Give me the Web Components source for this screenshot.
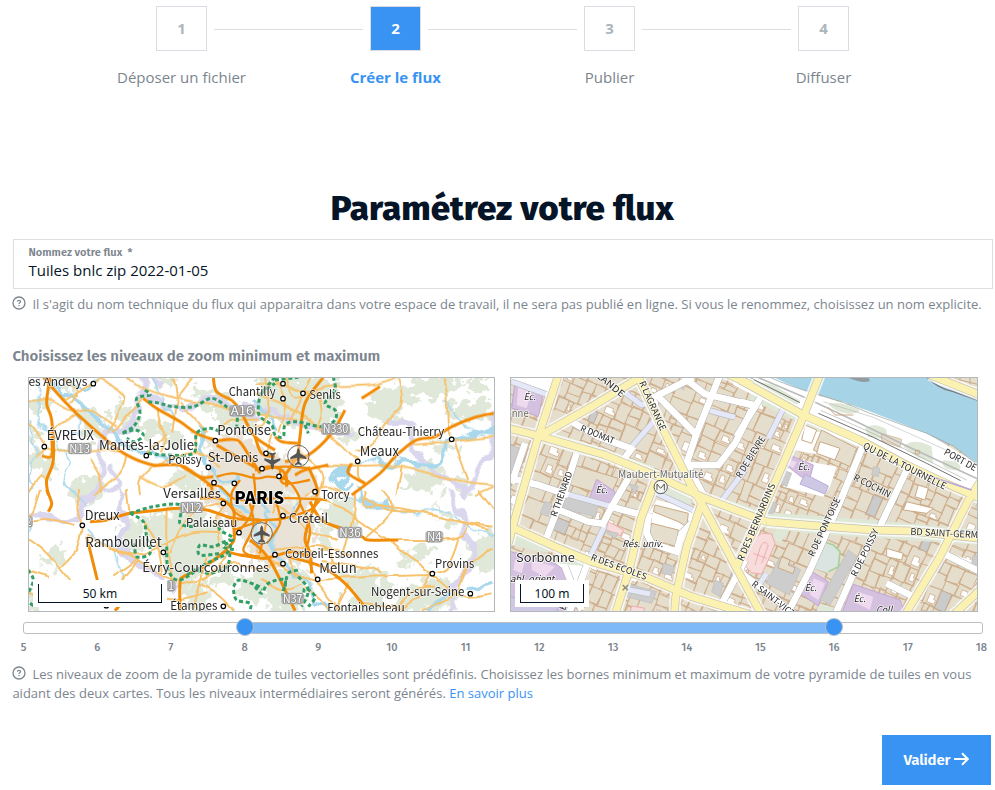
<!DOCTYPE html>
<html lang="fr">
<head>
<meta charset="utf-8">
<title>Paramétrez votre flux</title>
<style>
html,body{margin:0;background:#fff}
body{width:995px;height:790px;overflow:hidden;font-family:"Open Sans","Noto Sans",sans-serif;color:#7c858e;
--head:"Fira Sans","Noto Sans",sans-serif;--blue:#3993f3;--ink:#051426;--line:#dcdee2}
</style>
</head>
<body>
<flux-page></flux-page>
<script>
const define=(name,html,setup)=>customElements.define(name,class extends HTMLElement{
  connectedCallback(){
    if(this.shadowRoot)return;
    this.attachShadow({mode:'open'}).innerHTML=typeof html==='function'?html(this):html;
    if(setup)setup(this);
  }
});

define('step-item',el=>`<style>
:host{display:block;flex:0 0 214px;text-align:center}
.row{display:flex;align-items:center;height:45px}
.line{flex:1;height:1px;background:var(--line);position:relative;top:.5px}
.line.l{margin-right:7px}.line.r{margin-left:7px}
:host([first]) .l,:host([last]) .r{background:none}
.box{box-sizing:border-box;width:51px;height:45px;border:1px solid #dadce3;font-weight:700;font-size:15px;line-height:43px;color:#adb5bd}
.label{font-size:15px;line-height:22px;margin-top:15px}
:host([active]) .box{background:var(--blue);color:#fff}
:host([active]) .label{color:var(--blue);font-weight:700}
</style><div class="row"><span class="line l"></span><span class="box">${el.getAttribute('n')}</span><span class="line r"></span></div><div class="label"><slot></slot></div>`);

define('help-text',`<style>
:host{display:block;font-size:13px;line-height:19px;color:#7c858e;letter-spacing:.007px}
svg{width:14px;height:14px;vertical-align:-.5px;margin-right:6px;margin-top:-2px}
</style><svg viewBox="0 0 14 14"><circle cx="7" cy="7" r="6" fill="none" stroke="#7c858e" stroke-width="1.3"/><path d="M5.4 5.6Q5.5 4.3 7 4.3T8.6 5.6Q8.6 6.3 7.8 6.8T7 7.9M7 9v1.2" fill="none" stroke="#7c858e" stroke-width="1.2"/></svg><slot></slot>`);

define('text-field',el=>`<style>
:host{display:block;box-sizing:border-box;height:50px;border:1px solid var(--line);padding:6px 15px 6px 14.5px}
.l{font:600 11px/13px var(--head);color:#7c858e;white-space:pre}
.v{font-size:15px;line-height:23px;color:var(--ink)}
</style><div class="l">${el.getAttribute('label')}  *</div><div class="v"><slot></slot></div>`);

define('zoom-slider',el=>{
  const n=[];for(let i=5;i<=18;i++)n.push(`<span>${i}</span>`);
  return `<style>
:host{display:block;width:960px}
.track{position:relative;box-sizing:border-box;height:12px;border:1px solid #bcbec0;border-radius:3px;background:#fff}
.range{position:absolute;top:0;bottom:0;left:221px;width:589px;background:#7db8f8}
i{position:absolute;box-sizing:border-box;width:18px;height:18px;border-radius:50%;top:-5px;background:var(--blue);border:1px solid #b9c0c8}
.nums{display:flex;justify-content:space-between;margin:7px -9px 0 -10px;font:500 11px/13px var(--head);color:#7c858e}
.nums span{width:21px;text-align:center}
</style><div class="track"><div class="range"></div><i style="left:212px"></i><i style="left:801px"></i></div><div class="nums">${n.join('')}</div>`});

define('primary-button',`<style>
:host{display:flex;align-items:center;justify-content:center;box-sizing:border-box;width:109px;height:50px;background:var(--blue);color:#fff;font:600 15px/20px var(--head)}
span{letter-spacing:-.15px}
svg{width:15px;height:14px;margin:-2px 0 0 4px}
</style><span><slot></slot></span><svg viewBox="0 0 15 14"><path d="M0 7H13.5M8 1.2 13.8 7 8 12.8" fill="none" stroke="#fff" stroke-width="2"/></svg>`);

/* ---------- map drawing helpers ---------- */
const pts=s=>s.trim().split(/\s+/).map(p=>p.split(',').map(Number));
// Catmull-Rom spline through the points
const curve=s=>{
  const p=pts(s);let d=`M${p[0]}`;
  for(let i=0;i<p.length-1;i++){
    const a=p[i-1]||p[i],b=p[i],c=p[i+1],e=p[i+2]||c;
    d+=`C${b[0]+(c[0]-a[0])/6},${b[1]+(c[1]-a[1])/6} ${c[0]-(e[0]-b[0])/6},${c[1]-(e[1]-b[1])/6} ${c}`;
  }
  return d;
};
const poly=s=>'M'+pts(s).map(p=>p.join()).join('L')+'Z';
const line=s=>'M'+pts(s).map(p=>p.join()).join('L');
// data: {tile: 'path | path'}, tiles being offsets on the drawing grid
const layer=(data,off,fn,attrs)=>`<g ${attrs}>`+Object.entries(data).map(([k,v])=>`<path transform="translate(${off[k]})" d="${v.split('|').map(fn).join('')}"/>`).join('')+'</g>';
const FONT='Noto Sans CJK SC,Noto Sans,sans-serif';
const label=(x,y,t,w,size,o={})=>`<text x="${x}" y="${y}" font-size="${size}" textLength="${w}" lengthAdjust="spacingAndGlyphs" ${o.rot?`transform="rotate(${o.rot} ${x} ${y})"`:''} fill="${o.fill||'#262626'}" ${o.b?'font-weight="900"':''} ${o.i?'font-style="italic"':''} ${o.halo?`stroke="${o.halo}" stroke-width="${o.hw||5}" paint-order="stroke" stroke-linejoin="round"`:''}>${t}</text>`;

const mapStyle=`<style>
:host{display:block;box-sizing:border-box;height:235px;border:1px solid #b3b8bb;position:relative;overflow:hidden;background:#fff}
svg{display:block}
.scale{position:absolute;left:4px;bottom:4px;background:#fff;padding:4px 5px;}
.scale div{box-sizing:border-box;height:19px;border:1px solid var(--ink);border-top:0;font:12px/19px "Noto Sans",sans-serif;color:var(--ink);text-align:center}
</style>`;

define('region-map',()=>{
  const off={A:'0 0',B:'705 0',C:'0 360',D:'705 360'};
  const forest={
  A:'24,95 60,85 88,100 70,125 30,120|165,135 225,118 250,150 232,205 190,190|24,180 60,195 24,215|24,240 70,255 112,300 80,310 24,270|345,160 400,155 440,175 430,205 380,195|520,70 600,75 640,110 610,140 540,110|150,355 200,320 245,350 210,380 140,375|470,300 540,320 530,365 450,340|110,22 170,22 150,60 110,50|400,22 470,22 440,55|280,120 310,100 330,150 300,180|580,130 680,130 700,180 600,165|440,180 490,200 470,230 430,215',
  B:'60,25 200,22 240,60 235,160 160,165 60,150 10,120 20,60|330,95 440,50 520,25 620,25 590,60 470,90 430,140 360,160|560,110 690,95 705,130 650,160 600,150|460,330 500,280 560,310 540,362 450,345|520,200 600,220 560,245|0,20 60,22 30,70|640,30 700,30 705,70 650,60|600,320 640,340 620,370|250,180 310,190 280,215',
  C:'370,80 480,65 560,80 615,120 610,180 560,230 490,290 445,250 440,200 380,140|290,130 350,90 370,170 340,200|105,172 130,190 110,235 60,215|480,290 550,290 560,350 500,362|650,270 720,275 720,330 660,320|24,290 60,300 50,362 24,362|140,0 200,5 190,40 150,30|560,290 600,240 650,250 620,290',
  D:'200,50 290,30 310,70 280,110 200,105|435,200 520,170 520,195 440,225|240,250 340,235 395,290 360,362 280,362 290,300|640,170 720,130 720,230 650,230|430,300 560,270 600,330 500,362 400,350|60,250 130,240 160,300 120,362 30,350|550,60 600,80 590,120|0,250 60,240 50,300 0,300|180,110 220,130 200,180'};
  const purple={
  A:'372,22 375,60 350,90 345,140 320,185 265,180 240,230 245,290 240,350 190,400|375,50 420,105 520,110 570,85 640,115 720,150|265,290 300,350 240,360|400,22 425,50',
  B:'-40,105 60,125 130,160 200,180 300,190|400,160 470,165 470,230 520,290 560,320 620,350 640,375|716,120 716,240 680,280 640,370',
  C:'30,80 70,75 130,90 180,80 190,40 230,0|310,0 300,60 325,100 290,160 330,210 390,240 440,280 470,300|300,160 350,210',
  D:'590,0 600,60 640,80 620,130 660,180 640,230 600,290 590,362|640,20 620,0'};
  const thinWater={
  A:'60,22 60,110 45,150 90,180 120,230 150,280 130,330 170,370|160,120 180,170 150,200|24,150 45,230 35,300 24,370|400,22 420,90 480,160',
  B:'560,90 600,130 640,180 690,200|200,280 300,290 370,260',
  C:'200,120 230,150 270,170 300,230 310,290|24,130 40,90|150,0 200,50',
  D:'250,0 320,30 400,45 480,70 560,65 620,90 660,120 716,130|140,20 100,90'};
  const water={
  A:'90,30 120,80 160,70 190,110 240,150 290,200 330,240 380,250 430,260 480,260|150,30 190,60 230,35|540,170 545,250 580,300 610,340 660,325',
  B:'280,290 230,320 255,350 290,345|0,90 30,125 60,180|260,340 280,290 240,330|370,260 400,290 440,270 510,290 560,270 580,220 650,200 716,180',
  C:'605,0 625,40 690,70 705,130 720,170',
  D:'30,70 60,110 50,160 70,200 110,240 160,280 190,340 250,362|310,0 340,45 400,40|640,300 716,285|600,310 560,330 520,362|0,30 40,60'};
  const minor={
  A:'24,100 80,85 150,120 210,120 290,170|240,22 310,80 290,140 265,190|130,90 210,45 240,22|170,130 90,190|75,230 130,245 240,240 300,245|210,265 240,320 240,370|24,160 60,200 75,230 50,260|320,22 350,45 470,85 590,105 660,130|460,22 470,80 460,190|520,22 470,85|410,110 415,150 435,200 420,250|380,250 440,190|320,255 300,310 220,375|400,285 360,330 360,375|360,320 430,350 500,320|480,100 530,150 560,190|530,190 530,250 600,260|400,290 460,260 540,250 600,290|24,370 60,320 80,330|600,180 640,150 720,150|150,100 170,60 130,22|375,80 330,130 280,190',
  B:'0,40 60,40 160,65 220,50 350,45 420,22|60,22 90,100 70,190|90,22 120,80 180,65 200,130 180,180|430,22 440,100 400,150 350,225 300,240|565,22 575,90 580,180 590,210|180,170 250,215 290,255 310,270|210,285 330,290 440,290 600,330 716,345|440,290 425,375|600,220 640,330|470,220 580,215 716,200|30,20 40,90 30,160 0,170|0,130 130,150|170,22 100,170|310,275 310,320 330,340|0,70 100,110 200,180 220,200|50,190 30,260|130,240 200,310 190,375|150,375 210,350 280,370|660,375 716,350',
  C:'24,145 70,180 120,235 170,300|120,235 170,180 185,110|24,95 100,90 160,105|220,150 280,180 360,190 420,170 520,130 600,130|370,95 410,160 430,260|280,260 350,210|200,130 270,180 340,200 430,260 470,270|290,362 310,270 360,210|330,75 320,0|440,60 440,160 460,280|540,60 500,90 450,190|480,280 560,260 620,200|560,200 540,280 520,362|540,280 600,320 640,362|550,270 640,220 720,240|620,40 590,90 600,170|24,310 100,320|24,240 90,260|180,100 170,0|500,70 610,40 680,80|60,0 40,60 24,80|400,320 480,330 560,310',
  D:'170,20 250,50 320,100 400,150 460,200 530,250|300,0 295,90 260,200|330,0 330,50 410,50 640,100 716,110|320,20 400,60 510,70 700,120|430,150 600,145 640,100|330,145 390,90 420,50|610,145 580,230 540,250|190,270 350,260 530,255|380,250 350,235 200,210|530,255 580,300 640,320 716,310|530,255 490,320 430,362|500,362 600,310 640,230 716,170|190,280 160,200 150,130|60,180 200,170 240,230|280,280 240,362|20,20 90,60 160,120 250,150|100,200 120,250 190,270|190,280 230,330 260,362|330,340 420,350|670,0 716,60|50,70 80,0|0,180 60,220 130,260|0,240 80,220|420,362 480,300 540,290|190,180 250,180 300,200|380,0 420,50|20,270 80,300 140,280|150,290 210,340 220,362'};
  const major={
  A:'90,22 80,100 95,150 100,270 80,330 85,375|70,22 130,90 180,140 260,210 320,255 400,285 480,285 540,320 580,320|580,22 590,65 640,95 665,130 705,200 765,240|370,85 410,115 480,155 530,190 590,212|66,258 95,258 95,200|590,212 650,210 680,245 720,310|480,285 570,345 570,375|590,225 650,260 720,300',
  B:'205,22 150,100 135,200 125,260 80,330|270,120 230,190 160,255 90,275|320,85 375,50|716,130 660,142 590,170 540,200 480,212 420,260 375,310 290,375|60,200 80,215 130,220|120,315 150,300 220,285|160,290 185,350 185,380|290,280 280,310 330,340|0,200 20,250 60,260|0,300 50,290 90,310 95,350',
  C:'80,0 95,40 85,65|210,95 260,90 330,70 420,60 480,55 560,60 640,85 720,90|200,140 232,270|620,180 560,225 490,260 480,280 480,362|640,100 642,150 620,180 660,195 720,200|300,345 285,362|540,25 600,25 640,60 640,100',
  D:'-15,150 20,180 50,220 100,320 120,362|185,30 160,100 150,150 165,190 170,250|240,110 320,140 340,150 430,150|100,200 200,230 270,280 325,345|-40,195 30,205 110,185 170,200|165,35 200,90 260,115'};
  // dense network around the capital
  const city='590,320 640,310 710,325 745,320 800,330 830,365 840,400 810,440 740,450 680,445 640,420 635,370 660,330|560,345 600,350 640,385 690,390 760,385 840,385 920,390|700,310 705,370 690,440 640,500|720,300 790,290 870,295|780,300 790,340 870,330|740,450 720,550|690,400 700,470 670,540 705,560|810,440 870,420 900,390|770,400 780,460 740,520|640,480 730,450|840,400 870,480 850,560';
  const green={
  A:'375,60 390,75 350,85 360,130 340,170 305,190 345,180 370,195 345,215 320,205|385,95 420,100 460,110 520,110 575,85 620,110 650,130 650,170|385,250 440,255 520,250 530,190 570,175 600,185|330,225 350,240',
  B:'60,22 20,70 10,110 15,140 50,165 60,195 85,200 90,165 125,155 200,170 240,150 240,120 210,100 240,60 235,22|20,70 60,40|150,165 160,190|60,30 130,22',
  C:'330,70 370,95 380,140 390,190 350,200 345,160|330,70 400,50 480,45 480,100 520,110|440,170 445,240 480,270 560,220 620,190 630,150 580,170 540,165 540,195 600,190|600,90 600,120 640,145 610,170 650,180|630,190 620,230 570,250 520,240 500,260|24,240 40,270 24,310|640,290 660,270 720,290|640,300 650,330 690,340 690,362|30,340 45,350',
  D:'0,290 20,310 40,280 90,270 85,320 140,320 150,295 180,320 160,350|90,290 100,250 130,240|130,260 160,300 140,350|0,290 20,300'};
  const towns={A:'220,41 73,230 379,257 586,212 565,292 582,338 643,340',B:'84,41 84,86 144,70 590,208 308,274 33,250 21,296 72,319 180,365',C:'187,106 430,187 657,128 610,40 610,349 259,347',D:'84,77 60,194 84,221 188,268 532,251 646,311'};
  const plane='M0-24q5 4 5 16L24 4v6L4 5 3 18l7 6v4L0 25l-10 3v-4l7-6L-4 5-24 10V4L-5-8q0-12 5-16z';
  let s='';
  s+=layer(forest,off,curve,'fill="#e0e8d9" stroke="#e0e8d9" stroke-width="10" filter="url(#rough)"');
  s+='<path filter="url(#rough)" fill="#e9e2d6" d="M560,215L640,190 700,215 760,250 850,275 890,330 875,430 890,520 860,600 800,560 760,600 700,560 650,480 600,440 560,380Z"/>';
  s+='<path filter="url(#rough)" fill="#eef4e7" d="M600,345h40v50h-35zM790,365h40v40h-30z"/>';
  s+=layer(purple,off,curve,'fill="none" stroke="#d9d6ed" stroke-width="18" stroke-linejoin="round" filter="url(#wave)"');
  s+=layer(thinWater,off,curve,'fill="none" stroke="#a9d8ec" stroke-width="5" filter="url(#wave)"');
  s+=layer(water,off,curve,'fill="none" stroke="#a9d8ec" stroke-width="12" stroke-linecap="round" filter="url(#wave)"');
  s+=layer(minor,off,curve,'fill="none" stroke="#f7c36e" stroke-width="6" filter="url(#small)"');
  s+=layer(major,off,curve,'fill="none" stroke="#f28b05" stroke-width="9"');
  s+=`<path fill="none" stroke="#f28b05" stroke-width="7" d="${city.split('|').map(curve).join('')}"/>`;
  s+=layer(green,off,curve,'fill="none" stroke="#339f66" stroke-width="9" stroke-dasharray="12 8"');
  for(const k in towns)s+=`<g transform="translate(${off[k]})" fill="#fff" stroke="#000" stroke-width="3.5">`+pts(towns[k]).map(p=>`<circle cx="${p[0]}" cy="${p[1]}" r="6.8"/>`).join('')+'</g>';
  s+=`<g fill="#555"><path transform="translate(757 275) rotate(180)" d="${plane}"/><g stroke="#666" stroke-width="3" fill="#ffffff55"><circle cx="835" cy="258" r="32"/><circle cx="725" cy="490" r="32"/></g><path transform="translate(835 258)" d="${plane}"/><path transform="translate(725 490)" d="${plane}"/></g>`;
  const sh=(x,y,t,w)=>`<rect x="${x-5}" y="${y-30}" width="${w+10}" height="35" rx="10" fill="#aaa" fill-opacity=".85"/>`+label(x,y,t,w,34,{fill:'#fff',halo:'#8c8c8c',hw:5});
  s+=sh(632,135,'A16',68)+sh(148,248,'N13',62)+sh(908,190,'N330',77)+sh(484,425,'N12',61)+sh(958,500,'N36',64)+sh(1221,513,'N4',44)+sh(789,698,'N37',58)+sh(444,660,'1',18)+sh(6,468,'12',28);
  const L=[[15,47,'les Andelys',187,36],[80,211,'ÉVREUX',142,41],[237,241,'Mantes-la-Jolie',285,41],[445,281,'Poissy',100,36],[563,275,'St-Denis',152,39],[592,195,'Pontoise',161,40],[626,77,'Chantilly',141,36],[430,384,'Versailles',173,38],[868,88,'Senlis',94,36],[1013,197,'Château-Thierry',260,36],[1019,258,'Meaux',118,40],[903,388,'Torcy',86,36],[194,451,'Dreux',105,40],[498,471,'Palaiseau',154,36],[196,531,'Rambouillet',229,41],[367,605,'Évry-Courcouronnes',381,39],[451,719,'Étampes',141,36],[806,459,'Créteil',119,39],[795,565,'Corbeil-Essonnes',280,36],[898,610,'Melun',112,40],[1245,594,'Provins',118,36],[1053,677,'Nogent-sur-Seine',280,36],[922,726,'Fontainebleau',232,36]];
  L.forEach(l=>s+=label(...l,{halo:'#ffffffb0'}));
  s+=label(643,402,'PARIS',150,53,{b:1,fill:'#000',halo:'#fff'});
  const noise='x="-5%" y="-5%" width="110%" height="110%" color-interpolation-filters="sRGB"';
  return mapStyle+`<svg width="465" height="233" viewBox="27 24 1395 699" font-family="${FONT}"><defs>
<filter id="rough" ${noise}><feTurbulence type="fractalNoise" baseFrequency=".035" numOctaves="3" seed="4"/><feDisplacementMap in="SourceGraphic" scale="90" xChannelSelector="R" yChannelSelector="G"/></filter>
<filter id="wave" ${noise}><feTurbulence type="fractalNoise" baseFrequency=".03" numOctaves="1" seed="9"/><feDisplacementMap in="SourceGraphic" scale="42" xChannelSelector="R" yChannelSelector="G"/></filter>
<filter id="small" ${noise}><feTurbulence type="fractalNoise" baseFrequency=".02" numOctaves="1" seed="2"/><feDisplacementMap in="SourceGraphic" scale="20" xChannelSelector="R" yChannelSelector="G"/></filter>
</defs>${s}</svg><div class="scale" style="width:124px;padding-left:5px"><div>50 km</div></div>`;
});

define('street-map',()=>{
  const off={E:'0 0',F:'705 0'};
  let seed=11;const rnd=()=>(seed=(seed*16807)%2147483647)/2147483647;
  let lots='',court='',grey='';
  // building plots: recursive random subdivision of the rotated ground
  const split=(x,y,w,h)=>{
    if((w<62&&h<62&&rnd()<.82)||(w<34&&h<34)){
      const j=()=>(rnd()-.5)*6;
      lots+=`M${x+j()},${y+j()}L${x+w+j()},${y+j()} ${x+w+j()},${y+h+j()} ${x+j()},${y+h+j()}Z`;
      const r=rnd();
      if(r<.17){const a=w*(.25+rnd()*.15),b=h*(.25+rnd()*.2);court+=`M${x+a},${y+b}h${w*.4}v${h*.22}h${w*.14}v${h*.24}h${-w*.54}z`}
      else if(r<.185)grey+=`M${x},${y}h${w}v${h}h${-w}z`;
      return;
    }
    const t=.36+rnd()*.28;
    if(w>h){split(x,y,w*t,h);split(x+w*t,y,w*(1-t),h)}else{split(x,y,w,h*t);split(x,y+h*t,w,h*(1-t))}
  };
  split(-300,-700,1900,1800);
  const yellow={
  E:'0,172 110,200 300,255 460,320 600,385 785,455|165,0 100,200 45,390 10,520|100,200 260,110 400,25|395,10 470,170 560,350 590,400 660,530 770,735|590,400 545,530 512,680 508,735|450,335 410,440 375,590 330,735|0,462 150,530 260,575 430,625 560,680 740,735|640,0 740,45',
  F:'0,30 190,135 360,210 500,285 640,350 720,385|245,0 190,140 130,280 60,440 -10,590|80,455 200,465 400,480 510,483 720,505|720,335 680,400 600,560 540,660 495,735|570,15 720,75|640,735 720,660'};
  const white={
  E:'190,150 280,200 385,238|385,230 340,290|215,250 180,360 118,520|0,320 100,345 190,375|310,408 440,442|370,325 320,410 290,470|255,560 190,735|150,415 250,455 300,462|420,60 450,100 450,150|440,85 565,22|460,80 575,195|645,15 575,190 545,280 600,385|550,285 640,285 690,220 740,120|535,22 600,72 740,105|430,430 425,490 440,520 515,545 530,490 560,460|640,720 720,570|60,220 20,340|180,590 230,720',
  F:'370,225 290,420 210,600 140,735|505,290 415,480|410,480 345,600 285,735|-10,600 100,680 160,735|600,545 720,605|440,640 520,680|60,85 -10,200|0,95 40,105'};
  const lav={E:'20,35 130,75|350,60 410,105 450,92|450,150 375,235|185,372 320,410|300,465 255,560|615,122 690,142|365,658 435,672|650,392 720,300|455,370 575,425',F:'130,115 85,205|0,310 30,260|80,610 60,640'};
  let s='<g transform="rotate(23 350 350)">'+`<path d="${lots}" fill="#e6decd" stroke="#cdad8b" stroke-width="2.8"/><path d="${grey}" fill="#cbcbcb" stroke="#bba793" stroke-width="2"/><path d="${court}" fill="#fff" stroke="#cba985" stroke-width="2"/></g>`;
  // planted strips
  s+=layer({E:'100,175 260,225 450,290 440,310 250,262 100,215|455,345 560,375 560,410 450,375|590,375 720,405 720,440 600,405|16,485 120,510 130,550 16,525|150,560 240,580 210,620 150,590',F:'60,425 400,450 720,480 720,525 200,490 60,470|110,475 150,480 120,520 95,500|0,400 80,430 60,450 0,440|30,60 100,85 230,140 350,215 330,235 90,115 30,90|235,700 290,715 270,730 230,730'},off,poly,'fill="#dfe8d7"');
  s+=layer({E:'455,390 560,415 580,440 555,520 430,500 425,440|20,22 150,22 135,70 20,30|150,580 260,590 210,700 170,640',F:'170,180 280,190 340,235 330,270 160,240|140,300 180,270 290,290 270,350 250,380 130,350|600,540 720,580 720,600 600,560'},off,poly,'fill="#fff"');
  s+=layer({E:'450,405 550,430 545,470 520,455 445,425|440,460 520,480 515,530 430,505|190,280 340,325 315,380 180,340',F:'245,180 350,235 330,290 220,240'},off,poly,'fill="#e6decd" stroke="#cba985" stroke-width="3"');
  s+=layer({F:'240,215 300,235 285,270 230,250|195,165 230,180 215,220 185,210|535,345 565,355 555,390 525,380|500,395 580,415 560,430 490,420|440,535 490,550 485,570 440,560'},off,poly,'fill="#fff" stroke="#cba985" stroke-width="3"');
  // schools and public buildings
  s+=layer({E:'30,35 115,70 100,140 60,125 20,115|275,328 330,365 322,408 253,385|16,545 150,580 190,610 210,730 16,730',F:'155,258 220,285 208,332 180,318 138,285|205,598 265,635 235,708 172,665|340,643 480,690 495,730 305,730'},off,poly,'fill="#d4c0df" stroke="#c3a6d3" stroke-width="3"');
  s+=layer({E:'40,50 80,65 65,115 35,105|30,570 60,570 50,610 25,600|80,570 150,590 120,620 80,600|100,670 160,690 150,730 110,710',F:'150,270 170,275 160,295 145,285|220,625 255,640 235,690 210,675|350,665 400,680 390,720 350,700'},off,poly,'fill="#efd9ee"');
  s+=layer({F:'195,312 265,348 255,372 180,342',E:'16,680 160,710 150,735 16,735'},off,poly,'fill="#cfc8e4" stroke="#b9aedb" stroke-width="3"');
  s+=layer({E:'310,455 356,480 345,498 302,478|380,708 420,715 410,735 375,730',F:'50,500 65,490 95,492 105,520 85,570 65,612 35,608 12,585'},off,poly,'fill="#f8dcdb" stroke="#f0adad" stroke-width="3"');
  s+='<path d="M750,585 765,535Q775,505 790,525L770,580M745,550 785,565" fill="none" stroke="#f0adad" stroke-width="3"/>';
  s+=layer({E:'16,225 45,235 35,310 16,300|180,380 280,405 270,440 170,415|120,395 140,400 130,440 105,430|510,40 545,25 535,60|475,580 510,590 500,615 470,610|630,630 655,640 645,680 620,665|365,640 455,665 440,700 365,680|290,480 340,490 330,505|370,340 400,350 390,370',F:'120,560 182,600 148,675 78,640|325,540 352,560 270,705 240,688|130,300 155,310 140,350 120,340|90,395 110,400 100,430 85,430|400,290 420,295 415,320 395,315|700,555 720,560 720,590 695,580'},off,poly,'fill="#cdcdcd" stroke="#bdbdbd" stroke-width="2"');
  s+='<path d="M955,515L985,525 1005,545 1000,590 970,610 925,595 945,550Z" fill="#dae5e2"/><path d="M955,515L985,525 1005,545 1000,590 970,605" fill="none" stroke="#a7d19a" stroke-width="5"/><path d="M830,560l25,10-5,15 20,8-6,18-45-18z" fill="#e6decd" stroke="#cba985" stroke-width="3"/>';
  // river and quays
  s+='<g transform="translate(705 0)"><path d="M-20,10L100,10 220,72 380,120 560,190 720,285V400L500,300 190,150 -20,45Z" fill="#fff"/><path d="M90,15Q150,50 230,72T385,122L560,190 640,228 725,290V0H90Z" fill="#a7d3e7"/><path d="M90,22Q150,50 230,72T385,128L560,190 640,228 720,290" fill="none" stroke="#8f9b9f" stroke-width="2"/><path d="M565,22Q590,48 630,55L725,92V0H560Z" fill="#e9f0e4"/><path d="M555,15Q590,55 640,65L725,95" fill="none" stroke="#77797a" stroke-width="4"/><path d="M620,10L725,10V65L640,35Z" fill="#e6decd" stroke="#cba985" stroke-width="3"/><path d="M660,10V45M690,10V55M640,25L720,45" stroke="#cba985" stroke-width="3"/><path d="M320,22H385L390,33Q375,40 350,32Z" fill="#929ba0"/><path d="M0,22L100,45 180,92 170,105 80,80 0,30ZM265,102q30-10 75,10 40,15-10,20-45-5-65-30zM375,175q30-20 65,5v30l-55-10zM490,230q30-30 85,0l5,50-50-20zM610,270l40,5q30 30-15,25-35,-5-25-30z" fill="#dfe8d7"/><path d="M425,190L485,208 480,232 425,212Z" fill="#e6decd" stroke="#cba985" stroke-width="2"/><path d="M30,12L200,85 350,155 500,228 720,330" fill="none" stroke="#bbb" stroke-width="5"/><path d="M250,95L400,142 640,250" fill="none" stroke="#aaa" stroke-width="1.5"/><path d="M20,18L180,98M235,130L400,202 560,280 662,332" fill="none" stroke="#555" stroke-width="2.5"/><path d="M242,121L405,193 560,270 680,330" fill="none" stroke="#999" stroke-width="1.5"/><path d="M265,112L285,135 340,135M528,240l12,3-3,10-12-3z" fill="none" stroke="#cba985" stroke-width="3"/></g>';
  const road=(d,w,c,casing)=>layer(d,off,line,`fill="none" stroke="${casing}" stroke-width="${w+4}" stroke-linejoin="round"`)+layer(d,off,line,`fill="none" stroke="${c}" stroke-width="${w}" stroke-linejoin="round"`);
  s+=road(white,19,'#fff','#bbb')+road(lav,15,'#e4e8f8','#bbb')+layer(white,off,line,'fill="none" stroke="#fff" stroke-width="18"');
  s+=layer(yellow,off,line,'fill="none" stroke="#fff" stroke-width="36" stroke-linejoin="round" stroke-opacity=".75"');
  s+=road(yellow,21,'#fbf2b2','#c6c2b0');
  s+='<path d="M1265,315L1400,360" stroke="#b9a4d8" stroke-width="4"/>';
  s+='<circle cx="467" cy="351" r="20" fill="#ffffffb0" stroke="#555" stroke-width="3"/><path d="M456,361V342L467,355 478,342V361" fill="none" stroke="#555" stroke-width="3"/><path d="M353,645l16,16m0-16l-16,16" stroke="#888" stroke-width="4"/>';
  const h={halo:'#ffffffcc'};
  const L=[[272,20,'LANDE',100,27,39],[402,38,'R LAGRANGE',160,27,66],[224,182,'R DOMAT',108,27,22],[154,442,'R THENARD',142,27,-70],[256,570,'R DES ECOLES',176,27,20],[707,326,'R DE BIEVRE',142,27,-58],[714,575,'R DES BERNARDINS',250,27,-67],[926,562,'R DE PONTOISE',192,27,-65],[1054,622,'R DE POISSY',155,27,-64],[1072,234,'QU DE LA TOURNELLE',276,28,27],[1043,329,'R COCHIN',121,28,27],[1315,252,'PORT DE V',128,28,29],[1216,494,'BD SAINT-GERMAIN',248,28,3],[738,646,'R SAINT-VICTOR',190,27,38],[180,722,'E',16,26,-70]];
  L.forEach(([x,y,t,w,z,rot])=>s+=label(x,y,t,w,z,{...h,rot}));
  s+=label(340,325,'Maubert-Mutualité',255,30,{...h,fill:'#666'})+label(-60,142,'Sorbonne',131,31,{...h,fill:'#666'})+label(33,576,'Sorbonne',177,36,{halo:'#fff'});
  [[56,90,36],[272,370,36],[878,300,36],[899,664,36],[1046,697,36]].forEach(([x,y,w])=>s+=label(x,y,'Éc.',w,29,{...h,i:1}));
  s+=label(352,532,'Rés. univ.',122,28,{...h,i:1})+label(-10,635,'Établ. orient',158,27,{...h,i:1})+label(1113,730,'Coll.',56,28,{...h,i:1});
  return mapStyle+`<svg width="466" height="233" viewBox="18 24 1398 699" font-family="${FONT}">${s}</svg><div class="scale" style="width:64px"><div>100 m</div></div>`;
});

define('flux-page',`<style>
:host{display:block;height:790px;box-sizing:border-box;padding:6px 2px 0 12px}
.steps{display:flex;margin-left:62.5px}
h1{margin:95px 0 0 -1px;height:51px;font:800 35px/51px var(--head);text-align:center;color:var(--ink)}
text-field{width:980px;margin:5px 0 0 1px}
help-text{margin-left:.4px}
.h1t{margin-top:6px}
.sub{font:600 15px/20px var(--head);margin:32px 0 0 .4px;color:#7c858e}
.maps{display:grid;grid-template-columns:467px 468px;gap:15px;margin:11px 0 0 16px}
zoom-slider{margin:10px 0 0 11px}
.h2t{margin-top:11px}
a{color:var(--blue)}
.foot{display:flex;justify-content:flex-end;margin:32px 2px 0 0}
</style>
<div class="steps"><step-item n="1" first>Déposer un fichier</step-item><step-item n="2" active>Créer le flux</step-item><step-item n="3">Publier</step-item><step-item n="4" last>Diffuser</step-item></div>
<h1>Paramétrez votre flux</h1>
<text-field label="Nommez votre flux">Tuiles bnlc zip 2022-01-05</text-field>
<help-text class="h1t">Il s'agit du nom technique du flux qui apparaitra dans votre espace de travail, il ne sera pas publié en ligne. Si vous le renommez, choisissez un nom explicite.</help-text>
<div class="sub">Choisissez les niveaux de zoom minimum et maximum</div>
<div class="maps"><region-map></region-map><street-map></street-map></div>
<zoom-slider></zoom-slider>
<help-text class="h2t">Les niveaux de zoom de la pyramide de tuiles vectorielles sont prédéfinis. Choisissez les bornes minimum et maximum de votre pyramide de tuiles en vous aidant des deux cartes. Tous les niveaux intermédiaires seront générés. <a>En savoir plus</a></help-text>
<div class="foot"><primary-button>Valider</primary-button></div>`);
</script>
</body>
</html>
